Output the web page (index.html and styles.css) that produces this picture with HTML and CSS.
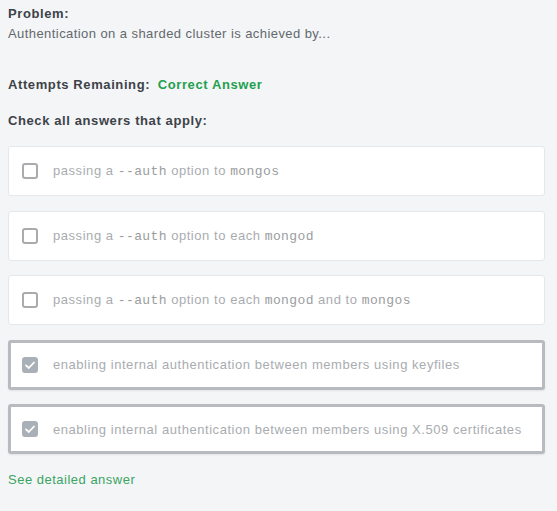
FILE: index.html
```html
<!DOCTYPE html>
<html>
<head>
<meta charset="utf-8">
<link rel="stylesheet" href="styles.css">
</head>
<body>
<div class="page">
  <div class="problem">
    <div class="label">Problem:</div>
    <div class="desc">Authentication on a sharded cluster is achieved by...</div>
  </div>
  <div class="attempts"><span class="label">Attempts Remaining:</span> <span class="correct">Correct Answer</span></div>
  <div class="label check-all">Check all answers that apply:</div>
  <ul class="answers">
    <li class="answer"><span class="box"></span><span class="text">passing a <code>--auth</code> option to <code>mongos</code></span></li>
    <li class="answer"><span class="box"></span><span class="text">passing a <code>--auth</code> option to each <code>mongod</code></span></li>
    <li class="answer"><span class="box"></span><span class="text">passing a <code>--auth</code> option to each <code>mongod</code> and to <code>mongos</code></span></li>
    <li class="answer selected"><span class="box"><svg viewBox="0 0 16 16" width="16" height="16"><path d="M4 8.3 L6.8 11 L12 5.5" fill="none" stroke="#fff" stroke-width="1.8" stroke-linecap="round" stroke-linejoin="round"/></svg></span><span class="text">enabling internal authentication between members using keyfiles</span></li>
    <li class="answer selected"><span class="box"><svg viewBox="0 0 16 16" width="16" height="16"><path d="M4 8.3 L6.8 11 L12 5.5" fill="none" stroke="#fff" stroke-width="1.8" stroke-linecap="round" stroke-linejoin="round"/></svg></span><span class="text">enabling internal authentication between members using X.509 certificates</span></li>
  </ul>
  <a class="detail" href="#">See detailed answer</a>
</div>
</body>
</html>
```
FILE: styles.css
```css
html, body {
  margin: 0;
  background: #f4f5f7;
}
body {
  font-family: "Liberation Sans", Arial, sans-serif;
  font-size: 13px;
  color: #3f4449;
}
.page {
  padding: 5px 12px 0 8px;
}
.label {
  font-weight: bold;
  color: #3d4247;
  letter-spacing: 0.6px;
}
.problem .label {
  line-height: 17px;
}
.desc {
  color: #63686d;
  line-height: 19px;
  margin-top: 2px;
  letter-spacing: 0.43px;
}
.attempts {
  margin-top: 33px;
  line-height: 17px;
}
.correct {
  color: #1fa04f;
  font-weight: bold;
  letter-spacing: 0.6px;
  margin-left: 4px;
}
.check-all {
  margin-top: 19px;
  line-height: 17px;
}
.answers {
  list-style: none;
  margin: 17px 0 0;
  padding: 0;
  display: flex;
  flex-direction: column;
  gap: 14.5px;
}
.answer {
  height: 48px;
  background: #fff;
  border: 1px solid #e5e8eb;
  border-radius: 3px;
  display: flex;
  align-items: center;
  padding-left: 13px;
  color: #a9acb0;
  letter-spacing: 0.55px;
}
.answer.selected {
  height: 44px;
  border: 3px solid #b7bbc0;
  padding-left: 11px;
  box-shadow: 0 1px 2px rgba(0,0,0,0.08);
}
.box {
  width: 12px;
  height: 12px;
  border: 2px solid #a9abae;
  border-radius: 3px;
  flex: none;
  margin-right: 15px;
  display: flex;
  align-items: center;
  justify-content: center;
}
.selected .box {
  border-color: #aab0b7;
  background: #aab0b7;
}
.box svg {
  flex: none;
}
code {
  font-family: "Liberation Mono", monospace;
  font-size: 13px;
  color: #9a9da0;
  letter-spacing: 0.4px;
}
.detail {
  display: inline-block;
  margin-top: 18px;
  color: #3ba463;
  text-decoration: none;
  letter-spacing: 0.5px;
}
```
